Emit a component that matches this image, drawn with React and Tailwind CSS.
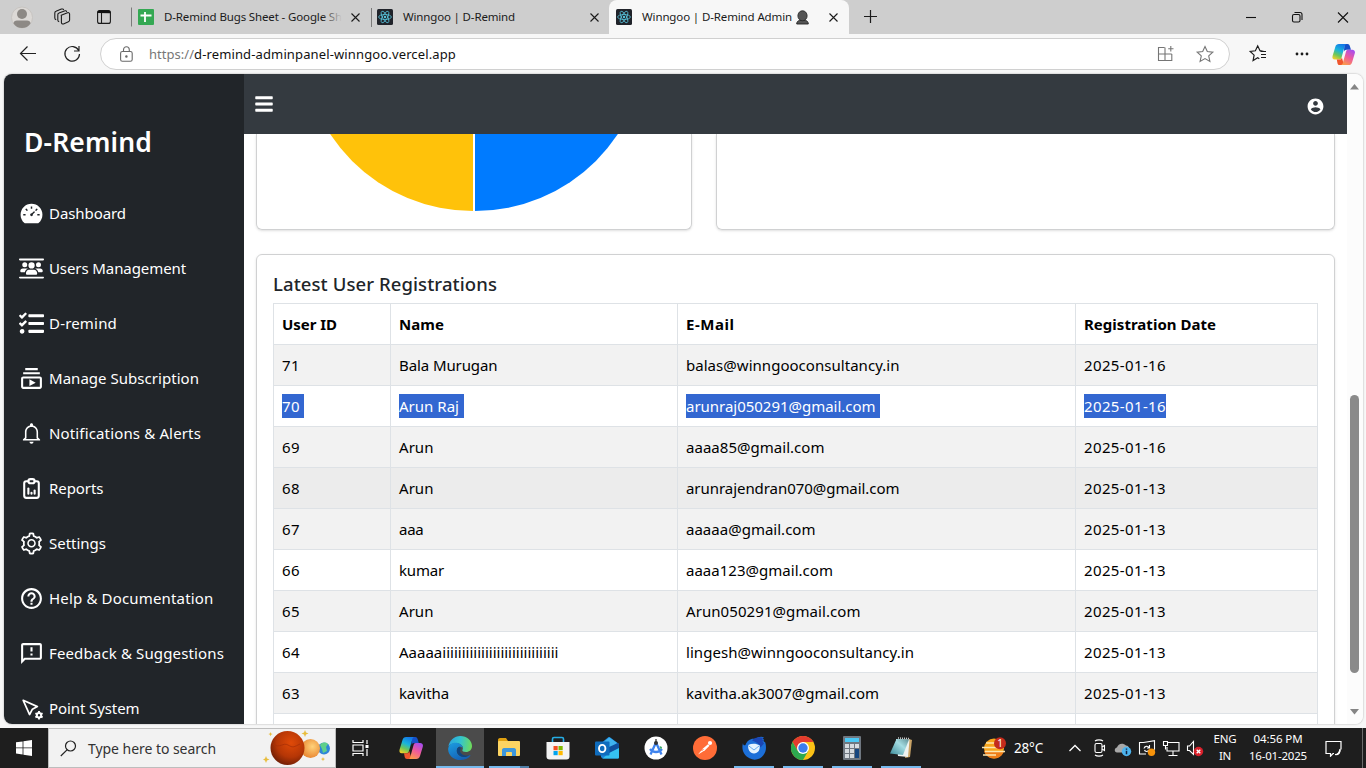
import React, { useLayoutEffect, useRef } from "react";
import { AiFillDashboard, AiOutlineSetting } from "react-icons/ai";
import { FaUsersBetweenLines } from "react-icons/fa6";
import { FaTasks, FaBars } from "react-icons/fa";
import {
  MdOutlineSubscriptions,
  MdHelpOutline,
  MdOutlineFeedback,
} from "react-icons/md";
import { IoMdNotificationsOutline } from "react-icons/io";
import { TbReportAnalytics } from "react-icons/tb";
import { RiAccountCircleFill } from "react-icons/ri";

/* Text that spreads its letters so that the line is exactly `w` pixels wide. */
function Fit({ w, className = "", children }) {
  const ref = useRef(null);
  useLayoutEffect(() => {
    const el = ref.current;
    el.style.letterSpacing = "0px";
    const n = el.textContent.length;
    el.style.letterSpacing = (w - el.getBoundingClientRect().width) / n + "px";
  }, [w, children]);
  return (
    <span ref={ref} className={"inline-block whitespace-pre " + className}>
      {children}
    </span>
  );
}

function PointIcon() {
  return (
    <svg width="25" height="25" viewBox="0 0 25 25" fill="none" className="shrink-0">
      <path d="M4.200 4.300L18.400 10.600L13.400 13.200L10.600 18.600Z" stroke="#fff" strokeWidth="1.700" strokeLinejoin="round" />
      <circle cx="20" cy="19.300" r="2.200" stroke="#fff" strokeWidth="2" />
      <path d="M20 15.100v1.700M20 21.800v1.700M16.400 17.200l1.400.8M22.200 20.600l1.400.8M23.600 17.200l-1.400.8M17.800 20.600l-1.400.8" stroke="#fff" strokeWidth="1.900" />
    </svg>
  );
}

const menu = [
  ["Dashboard", 77, AiFillDashboard],
  ["Users Management", 137, FaUsersBetweenLines],
  ["D-remind", 68, FaTasks],
  ["Manage Subscription", 150, MdOutlineSubscriptions],
  ["Notifications & Alerts", 152, IoMdNotificationsOutline],
  ["Reports", 54.5, TbReportAnalytics],
  ["Settings", 57, AiOutlineSetting],
  ["Help & Documentation", 164.5, MdHelpOutline],
  ["Feedback & Suggestions", 175, MdOutlineFeedback],
  ["Point System", 90.5, PointIcon],
];

const users = [
  ["71", "Bala Murugan", 98.5, "balas@winngooconsultancy.in", 213.5, "2025-01-16"],
  ["70", "Arun Raj", 60, "arunraj050291@gmail.com", 189.5, "2025-01-16"],
  ["69", "Arun", 34.5, "aaaa85@gmail.com", 138.5, "2025-01-16"],
  ["68", "Arun", 34.5, "arunrajendran070@gmail.com", 213.5, "2025-01-13"],
  ["67", "aaa", 24.5, "aaaaa@gmail.com", 129.5, "2025-01-13"],
  ["66", "kumar", 45, "aaaa123@gmail.com", 147, "2025-01-13"],
  ["65", "Arun", 34.5, "Arun050291@gmail.com", 174.5, "2025-01-13"],
  ["64", "Aaaaaiiiiiiiiiiiiiiiiiiiiiiiiiiiiii", 159.5, "lingesh@winngooconsultancy.in", 228, "2025-01-13"],
  ["63", "kavitha", 50, "kavitha.ak3007@gmail.com", 193, "2025-01-13"],
];

function ReactIcon() {
  return (
    <svg width="16" height="16" viewBox="0 0 16 16" className="shrink-0">
      <rect width="16" height="16" rx="1.5" fill="#20232a" />
      <g fill="none" stroke="#58c4dc" strokeWidth=".8">
        <ellipse cx="8" cy="8" rx="6.4" ry="2.5" />
        <ellipse cx="8" cy="8" rx="6.4" ry="2.5" transform="rotate(60 8 8)" />
        <ellipse cx="8" cy="8" rx="6.4" ry="2.5" transform="rotate(120 8 8)" />
      </g>
      <circle cx="8" cy="8" r="1.2" fill="#58c4dc" />
    </svg>
  );
}

function CloseX({ size = 9 }) {
  return (
    <svg width={size} height={size} viewBox="0 0 9 9" className="shrink-0" stroke="#1a1a1a" strokeWidth="1.1">
      <path d="M.5 .5l8 8M8.5 .5l-8 8" />
    </svg>
  );
}

function CopilotIcon({ size = 24, id }) {
  return (
    <svg width={size} height={size} viewBox="0 0 24 24">
      <defs>
        <linearGradient id={id + "a"} x1="0.6" y1="0" x2="0.2" y2="1">
          <stop offset="0" stopColor="#1479e8" />
          <stop offset=".4" stopColor="#19b4dc" />
          <stop offset=".7" stopColor="#6cc65a" />
          <stop offset="1" stopColor="#f6cf26" />
        </linearGradient>
        <linearGradient id={id + "b"} x1="0.8" y1="0" x2="0.3" y2="1">
          <stop offset="0" stopColor="#a44cf2" />
          <stop offset=".5" stopColor="#ee5a9c" />
          <stop offset="1" stopColor="#fb9a4b" />
        </linearGradient>
      </defs>
      <path d="M13 1h3.200c1.400 0 2 .8 2.400 2l1.200 4h-4.600c-1.500 0-2.400.8-2.800 2z" fill="#1650c8" />
      <path d="M7.200 1h8c-1 .3-1.600 1-2 2.400L10 15c-.5 1.500-1.500 2.300-3 2.300H2.800C.8 17.300 0 15.800.6 13.600L3.500 4C4 2 5.200 1 7.200 1z" fill={`url(#${id}a)`} />
      <path d="M5 17.300h2.500c1.500 0 2.300-.8 2.800-2.300L12 21c-.5 1.300-1.300 2-2.500 2H8c-1.200 0-2-.7-2.300-2z" fill="#f0562d" />
      <path d="M16.800 7h4.400c2 0 3.200 1.500 2.600 3.700L21 20c-.6 2-1.800 3-3.800 3H9.200c1.200-.2 1.800-1 2.200-2.400L14.500 9.300C14.900 7.800 15.500 7 16.800 7z" fill={`url(#${id}b)`} />
    </svg>
  );
}

function Tabs() {
  return (
    <div className="flex h-[34px] items-center bg-[#cecece] text-[11.5px] text-[#1b1b1b]">
      <svg width="132" height="34" viewBox="0 0 132 34" className="shrink-0" fill="none">
        <circle cx="22" cy="17.500" r="10.500" fill="#dcd9d6" stroke="#c4c0bc" strokeWidth=".8" />
        <circle cx="22" cy="14" r="5" fill="#8d8985" />
        <path d="M13.500 23.500c0-2 1.500-3 3.500-3h10c2 0 3.500 1 3.500 3-2 3-5 4.500-8.500 4.500s-6.500-1.500-8.500-4.500z" fill="#8d8985" />
        <g stroke="#1b1b1b" strokeWidth="1.100" strokeLinejoin="round">
          <path d="M61.200 15.300l6.300-2.500c1.100-.4 2.100.2 2.100 1.300v6c0 .8-.4 1.400-1.200 1.700l-4.900 2.100c-1.100.4-2.100-.2-2.100-1.300v-6.500z" />
          <path d="M59.200 21.700c-.9-.2-1.400-.8-1.400-1.700v-5.200c0-.8.400-1.400 1.200-1.700l5.400-2.200c1-.4 2 0 2.300.900" />
          <path d="M56.200 19.700c-.9-.2-1.400-.8-1.400-1.700v-5c0-.8.400-1.400 1.200-1.700l5.400-2.200c1-.4 2 0 2.300.900" />
          <rect x="97.600" y="10.600" width="12.800" height="12.800" rx="2" />
          <path d="M101.500 13v10.500" />
        </g>
        <path d="M97.500 13v-.5c0-1.200.8-2 2-2h9c1.200 0 2 .8 2 2v.8z" fill="#111" />
        <path d="M131.500 7.500v19" stroke="#7a7a7a" />
      </svg>
      <div className="flex w-[239px] items-center pl-1.5">
        <svg width="16" height="16" viewBox="0 0 16 16" className="shrink-0">
          <rect width="16" height="16" rx="1" fill="#34a853" />
          <path d="M7 3v10M2.500 6.500h11" stroke="#fff" strokeWidth="1.800" />
        </svg>
        <div className="relative ml-2.5 w-[178px] overflow-hidden">
          <Fit w={178}>D-Remind Bugs Sheet - Google Sh</Fit>
          <div className="absolute top-0 right-0 h-full w-5 bg-gradient-to-r from-transparent to-[#cecece]" />
        </div>
        <div className="ml-[9px] flex"><CloseX /></div>
      </div>
      <div className="h-[19px] w-px bg-[#7a7a7a]" />
      <div className="flex w-[237px] items-center pl-[5px]">
        <ReactIcon />
        <Fit w={112} className="ml-[10px]">Winngoo | D-Remind</Fit>
        <div className="ml-[75px] flex"><CloseX /></div>
      </div>
      <div className="flex h-full w-[240px] items-center rounded-t-lg bg-[#f7f7f7] pl-[7px]">
        <ReactIcon />
        <Fit w={150} className="ml-[10px]">Winngoo | D-Remind Admin</Fit>
        <svg width="13" height="15" viewBox="0 0 13 15" className="ml-1 shrink-0">
          <path d="M.7 14c0-2 1.200-3.500 3-3.500h5.600c1.800 0 3 1.500 3 3.500z" fill="#555" stroke="#222" strokeWidth=".9" />
          <ellipse cx="6.500" cy="5.800" rx="4.600" ry="5" fill="#555" stroke="#2b2b2b" strokeWidth=".9" />
        </svg>
        <div className="ml-5 flex"><CloseX /></div>
      </div>
      <svg width="44" height="34" viewBox="0 0 44 34" stroke="#1b1b1b" strokeWidth="1.200">
        <path d="M15 16.500h13M21.500 10v13" />
      </svg>
      <svg width="130" height="34" viewBox="0 0 130 34" className="ml-auto" fill="none" stroke="#111" strokeWidth="1.100">
        <path d="M10 17.500h10" />
        <rect x="56.500" y="14.500" width="7.500" height="7.500" rx="1.500" />
        <path d="M58.500 12.500h5.500c1.200 0 2 .8 2 2v5.500" />
        <path d="M102 12.500l10 10M112 12.500l-10 10" />
      </svg>
    </div>
  );
}

function Toolbar() {
  return (
    <div className="flex h-10 items-center bg-[#f7f7f7]">
      <svg width="100" height="40" viewBox="0 0 100 40" fill="none" stroke="#222" strokeWidth="1.200" className="shrink-0">
        <path d="M36 19.500H20.500M27.500 12.500l-7 7 7 7" />
        <path d="M78.700 16.500a7.300 7.300 0 1 0 .8 3.500M79 12v5h-5" />
      </svg>
      <div className="flex h-8 w-[1130px] items-center rounded-full border border-[#d0d0d0] bg-white text-[14px] text-[#111]">
        <svg width="13" height="16" viewBox="0 0 13 16" className="ml-[19px] shrink-0" fill="none" stroke="#6a6a6a" strokeWidth="1.100">
          <rect x=".6" y="5.500" width="11.600" height="9.800" rx="1.800" />
          <path d="M3.500 5.500V3.800C3.500 2 4.700.8 6.400.8s2.900 1.200 2.900 3v1.700" />
          <circle cx="6.400" cy="10.400" r=".7" fill="#444" />
        </svg>
        <span className="mt-px ml-4 text-[13px]">
          <Fit w={45} className="text-[#777]">https://</Fit>
          <Fit w={262}>d-remind-adminpanel-winngoo.vercel.app</Fit>
        </span>
        <svg width="79" height="30" viewBox="0 0 79 30" className="ml-auto" fill="none" stroke="#757575" strokeWidth="1.100">
          <path d="M14.500 8.500H8.500v13h13.300v-6.500M8.500 15h13.300M15 8.500v13M18.200 9.800h5.300M20.800 7v5.500" />
          <path d="M55 7.500l2.300 5.100 5.500.6-4.100 3.700 1.200 5.500-4.900-2.800-4.900 2.800 1.200-5.500-4.100-3.700 5.500-.6z" />
        </svg>
      </div>
      <svg width="102" height="40" viewBox="0 0 102 40" fill="none" stroke="#1b1b1b" strokeWidth="1.200" className="shrink-0">
        <path d="M34 17.500l-4-.8-2.300-4.900-2.300 5-5.200.6 3.900 3.700-1 5.500 4.600-2.800 1.600.9M30.500 17.500h5.500M31 20.500h5M31 23.500h5" />
        <g fill="#1b1b1b" stroke="none"><circle cx="67" cy="20" r="1.400" /><circle cx="72" cy="20" r="1.400" /><circle cx="77" cy="20" r="1.400" /></g>
      </svg>
      <CopilotIcon size={23} id="c1" />
    </div>
  );
}

function Sidebar() {
  return (
    <aside className="w-[240px] shrink-0 bg-[#212529] text-white">
      <div className="flex h-[112px] items-end pb-[26px] pl-5">
        <Fit w={128} className="text-[26.500px] leading-[35px] font-semibold">D-Remind</Fit>
      </div>
      <ul>
        {menu.map(([label, w, Icon]) => (
          <li key={label} className="flex h-[55px] items-center gap-[5px] pl-[15px]">
            <Icon size={25} className="shrink-0" />
            <Fit w={w} className="mb-0.5 text-[15px] leading-6">{label}</Fit>
          </li>
        ))}
      </ul>
    </aside>
  );
}

function Cell({ selected, w, tail, children }) {
  if (!selected) return <Fit w={w}>{children}</Fit>;
  return (
    <span className={"inline-block h-6 bg-[#3367d1] text-white " + tail}>
      <Fit w={w}>{children}</Fit>
    </span>
  );
}

function Registrations() {
  return (
    <section className="mt-6 h-[600px] rounded-md border border-[#d0d1d2] p-4 shadow-sm">
      <h2 className="h-8 pt-px text-[18.500px] leading-[24px] font-medium text-[#212529]">
        <Fit w={224}>Latest User Registrations</Fit>
      </h2>
      <table className="w-[1045px] table-fixed border-collapse text-[15px] leading-6 text-black [&_td]:h-[41px] [&_td]:border [&_td]:border-[#dee2e6] [&_td]:px-2 [&_td]:py-0 [&_th]:h-[41px] [&_th]:border [&_th]:border-[#dee2e6] [&_th]:px-2 [&_th]:py-0 [&_th]:text-left [&_th]:font-bold">
        <colgroup>
          <col className="w-[117px]" />
          <col className="w-[287px]" />
          <col className="w-[398px]" />
          <col />
        </colgroup>
        <thead>
          <tr>
            <th><Fit w={55}>User ID</Fit></th>
            <th><Fit w={45}>Name</Fit></th>
            <th><Fit w={48.5}>E-Mail</Fit></th>
            <th><Fit w={132}>Registration Date</Fit></th>
          </tr>
        </thead>
        <tbody>
          {users.map(([id, name, nw, mail, mw, date]) => {
            const sel = id === "70";
            return (
              <tr key={id} className={id === "68" ? "bg-[#ececec]" : Number(id) % 2 ? "bg-[#f2f2f2]" : "bg-white"}>
                <td><Cell selected={sel} tail="pr-1" w={18}>{id}</Cell></td>
                <td><Cell selected={sel} tail="pr-[5px]" w={nw}>{name}</Cell></td>
                <td><Cell selected={sel} tail="pr-1" w={mw}>{mail}</Cell></td>
                <td><Cell selected={sel} tail="" w={82}>{date}</Cell></td>
              </tr>
            );
          })}
          <tr className="bg-white"><td /><td /><td /><td /></tr>
        </tbody>
      </table>
    </section>
  );
}

function Page() {
  return (
    <div className="flex h-[650px] overflow-hidden rounded-lg bg-white shadow-[0_0_2px_rgba(0,0,0,0.35)]">
      <Sidebar />
      <main className="flex w-[1103px] shrink-0 flex-col">
        <header className="flex h-[60px] shrink-0 items-center justify-between bg-[#343a40] pr-[22px] pl-2.5 text-white">
          <FaBars size={20} />
          <RiAccountCircleFill size={19} className="mt-1" />
        </header>
        <div className="min-h-0 flex-1 overflow-hidden px-3">
          <div className="flex gap-6">
            <div className="flex h-24 w-[436px] justify-center rounded-b-md border border-t-0 border-[#d0d1d2] shadow-sm">
              <svg width="344" height="78" viewBox="302 134 344 78">
                <path d="M473 -131 A171 171 0 0 0 473 211 Z" fill="#ffc20a" />
                <path d="M475 -131 A171 171 0 0 1 475 211 Z" fill="#007bff" />
              </svg>
            </div>
            <div className="h-24 w-[619px] rounded-b-md border border-t-0 border-[#d0d1d2] shadow-sm" />
          </div>
          <Registrations />
        </div>
      </main>
      <div className="flex w-4 flex-col items-center bg-[#fcfcfc] pr-0.5">
        <svg width="9" height="6" viewBox="0 0 9 6" className="mt-2.5 shrink-0"><path d="M0 5.500L4.500 0 9 5.500z" fill="#858585" /></svg>
        <div className="mt-[305px] h-[278px] w-[9px] shrink-0 rounded-full bg-[#8a8a8a]" />
        <svg width="9" height="6" viewBox="0 0 9 6" className="mt-9 shrink-0"><path d="M0 0L4.500 5.500 9 0z" fill="#858585" /></svg>
      </div>
    </div>
  );
}

function Planets() {
  return (
    <svg width="72" height="38" viewBox="0 0 72 38">
      <defs>
        <radialGradient id="mars" cx=".6" cy=".35" r=".7"><stop offset="0" stopColor="#e04a08" /><stop offset=".6" stopColor="#b53606" /><stop offset="1" stopColor="#6b1d05" /></radialGradient>
        <radialGradient id="ven" cx=".6" cy=".4" r=".6"><stop offset="0" stopColor="#ffd27a" /><stop offset="1" stopColor="#ea8a35" /></radialGradient>
      </defs>
      <circle cx="61" cy="19.500" r="6" fill="#2f86d8" />
      <path d="M57 16c2-3 6-3 8-1l-2 3 1 4-4 2-1-4z" fill="#5fd08a" />
      <circle cx="47.500" cy="19.500" r="9.500" fill="url(#ven)" />
      <circle cx="24.500" cy="19" r="17" fill="url(#mars)" />
      <path d="M10 15c7 5 10-2 15 1s6 2 12-1" stroke="#a83006" strokeWidth=".8" fill="none" />
      <g fill="#e8bd3c">
        <path d="M3 27l1 2.500 2.500 1-2.500 1-1 2.500-1-2.500-2-1 2-1z" />
        <path d="M42 1l1 2.500 2.500 1-2.500 1-1 2.500-1-2.500-2.500-1 2.500-1z" />
        <path d="M7.500 3l.6 1.500 1.500.6-1.500.6-.6 1.500-.6-1.500-1.500-.6 1.500-.6z" />
        <path d="M60 28l.6 1.500 1.500.6-1.500.6-.6 1.500-.6-1.500-1.500-.6 1.500-.6z" />
      </g>
    </svg>
  );
}

const apps = [
  ["copilot", "", <CopilotIcon size={24} id="c2" />],
  ["edge", "active", (
    <svg width="24" height="24" viewBox="0 0 24 24">
      <defs>
        <linearGradient id="eg" x1="0" y1=".4" x2="1" y2=".5"><stop offset="0" stopColor="#2ba4e0" /><stop offset=".5" stopColor="#33c4cf" /><stop offset="1" stopColor="#6fdc5a" /></linearGradient>
        <linearGradient id="ed" x1="0" y1="0" x2=".6" y2="1"><stop offset="0" stopColor="#1b9de2" /><stop offset="1" stopColor="#1560b4" /></linearGradient>
      </defs>
      <path d="M.4 10.500C1.400 4.500 6.300 0 12.300 0 19 0 24 4.700 24 10c0 3.800-2.700 6-6 6-2.600 0-4-1-3.600-2 1.200-2.200.2-5.500-3.900-6.500C5.800 6.500 1.800 8 .4 10.500z" fill="url(#eg)" />
      <path d="M.2 12.500C.8 8.500 4.500 6.400 8.500 6.800c4 .4 6.200 3 6.200 5.200-1-1-2.400-1.500-3.500-1.200-3 1.200-3.200 5.500-.5 8.200 2.800 2.600 7.300 2.500 10.800.2.700-.4 1.100.2.700.8C20.200 22.500 16.500 24 12.500 24 5.200 24-.4 18.500.2 12.500z" fill="url(#ed)" />
      <path d="M11.500 10.800c-3.200 1-3.500 5.500-.8 8.200 2.800 2.600 7.300 2.500 10.800.2-2.500.8-6 .5-7.700-1.200-2.300-1.800-2.200-3.800-.8-5.500z" fill="#10457f" />
    </svg>
  )],
  ["explorer", "explorer", (
    <svg width="24" height="22" viewBox="0 0 24 22">
      <path d="M1 3c0-1 .5-2 2-2h6l2 3h11v6H1z" fill="#e0a010" />
      <rect x="1" y="4" width="22" height="15" rx="1" fill="#fcd462" />
      <path d="M5 19v-6c0-1 .6-2 2-2h10c1.400 0 2 1 2 2v6h-4v-3c0-.6-.4-1-1-1h-4c-.6 0-1 .4-1 1v3z" fill="#3d97dc" />
    </svg>
  )],
  ["store", "", (
    <svg width="24" height="24" viewBox="0 0 24 24">
      <path d="M6.500 6V3c0-1 .5-1.500 1.500-1.500h8c1 0 1.500.5 1.500 1.500v3" stroke="#25aee6" strokeWidth="1.600" fill="none" />
      <path d="M.5 6h23v14.500c0 2-1 3-3 3h-17c-2 0-3-1-3-3z" fill="#f3f3f3" />
      <path d="M7.500 10h4.200v4.200H7.500z" fill="#f25022" /><path d="M12.500 10h4.200v4.200h-4.200z" fill="#7fba00" />
      <path d="M7.500 15h4.200v4.200H7.500z" fill="#00a4ef" /><path d="M12.500 15h4.200v4.200h-4.200z" fill="#ffb900" />
    </svg>
  )],
  ["outlook", "", (
    <svg width="24" height="24" viewBox="0 0 24 24">
      <path d="M5 8l8-6.500c.8-.6 1.500-.6 2.300 0L24 8v13c0 1-.6 1.500-1.500 1.500h-15L6 21z" fill="#1a86d9" />
      <path d="M7 7l6.500-5c.5-.4 1.200-.4 1.700 0L22 7l-8 6z" fill="#3fb2ef" />
      <path d="M24 9v12c0 1-.6 1.500-1.500 1.500h-15z" fill="#35c1f1" />
      <path d="M14 11l9-4 1 1v4l-10 5z" fill="#0f4f9e" />
      <rect y="5.500" width="14.500" height="14" rx="1" fill="#0f6cbd" />
      <ellipse cx="7.200" cy="12.500" rx="3.200" ry="3.600" fill="none" stroke="#fff" strokeWidth="1.900" />
    </svg>
  )],
  ["studio", "", (
    <svg width="24" height="24" viewBox="0 0 24 24">
      <circle cx="12" cy="12" r="11.500" fill="#fff" />
      <path d="M12 6.500L6.500 18.500M12 6.500l5.500 12M6 13c3 4 9 4 12 0" stroke="#3f83ee" strokeWidth="2.300" fill="none" />
      <path d="M15.500 10l2.500 1-1 3z" fill="#2ea35a" /><circle cx="12" cy="7" r="2" fill="#333" /><path d="M12 3v3" stroke="#333" strokeWidth="1.300" />
    </svg>
  )],
  ["postman", "", (
    <svg width="24" height="24" viewBox="0 0 24 24">
      <circle cx="12" cy="12" r="12" fill="#ff6c37" />
      <path d="M5 18.500l5-6 5-4.300 1.500 1.500-4.500 4.500z" fill="#fff" /><circle cx="17" cy="7" r="2.100" fill="#fff" />
      <path d="M8.500 14.500l2-1" stroke="#ff6c37" />
    </svg>
  )],
  ["thunderbird", "run", (
    <svg width="24" height="24" viewBox="0 0 24 24">
      <path d="M1 7c0 2 1.200 2.800 2.500 2C5 4.500 9 2 13.500 3 16 .8 19.500.3 22 1.500L20.500 3l1.700.5L21.300 5l2 1.500C24.500 11 24.300 15.500 21.500 19 18.500 23.500 12.500 25 7.500 22.300 1.500 19.300-.8 13 1 7z" fill="#1c6fd8" />
      <path d="M10 4.500c3-3.500 8-4 11-2.500l-1 1.500 1.500.5-1 1.500 1.500 2-3.500 4c-1-3-3-5-8.500-7z" fill="#1b46b4" />
      <path d="M6.200 9c3.500-1.800 8-1.800 11.500.3.500 5-1.700 8-5.700 8.200-4-.3-6.300-3.500-5.800-8.500z" fill="#e6f4ff" />
      <path d="M6.300 9.500l5.700 4.500 5.600-4.500" stroke="#6aaef0" fill="none" />
    </svg>
  )],
  ["chrome", "run", (
    <svg width="24" height="24" viewBox="0 0 24 24">
      <circle cx="12" cy="12" r="12" fill="#fbc116" />
      <path d="M1.600 6A12 12 0 0 1 22.400 6H12L6.800 15z" fill="#e33b2e" />
      <path d="M1.600 6A12 12 0 0 0 12 24l5.200-9H6.800z" fill="#2da94f" />
      <circle cx="12" cy="12" r="6" fill="#fff" /><circle cx="12" cy="12" r="4.700" fill="#3b7ded" />
    </svg>
  )],
  ["calc", "run", (
    <svg width="18" height="24" viewBox="0 0 18 24">
      <rect width="18" height="24" rx="1" fill="#6f7780" /><rect x="2" y="2" width="14" height="4" fill="#4cc8f4" />
      <g fill="#d6dbe0"><path d="M2 8h4v4H2zM7 8h4v4H7zM12 8h4v4h-4zM2 13h4v4H2zM7 13h4v4H7zM2 18h4v4H2zM7 18h4v4H7z" /></g>
      <path d="M12 13h4v9h-4z" fill="#16467f" />
    </svg>
  )],
  ["notepad", "run", (
    <svg width="24" height="24" viewBox="0 0 24 24">
      <defs><linearGradient id="np" x1="0" y1="1" x2="1" y2="0"><stop offset="0" stopColor="#3b8b99" /><stop offset=".6" stopColor="#a4dce2" /><stop offset="1" stopColor="#5f8f94" /></linearGradient></defs>
      <path d="M20 3l3 1-2 17-5 1z" fill="#caa467" /><path d="M7 3L20.500 3.500 19 21l-10-1z" fill="#eef2f0" />
      <path d="M7.500 3l12.500.5L14 19 1 17.500z" fill="url(#np)" /><path d="M9 2l11 .5" stroke="#ccc" strokeWidth="1.500" strokeDasharray="1 1" />
    </svg>
  )],
];

function Tray() {
  return (
    <svg width="140" height="40" viewBox="1065 728 140 40" fill="none" stroke="#fff" strokeWidth="1.100">
      <path d="M1069.500 751l5.500-5.500 5.500 5.500" strokeWidth="1.300" />
      <rect x="1095" y="743.500" width="7" height="9" rx="1.500" /><path d="M1102 747l2.500-1.500v5l-2.500-1.500M1095 741c2-1.500 6-1.500 8 0M1095 755c2 1.500 6 1.500 8 0" />
      <path d="M1117 752.500c-3 0-3-4.500 0-5 1-4 6-5 9-2 4 0 4 6 2 7z" fill="#a8a8a8" stroke="none" />
      <circle cx="1126.500" cy="751.500" r="4.700" fill="#4db4ee" stroke="none" /><path d="M1126.500 748.500v1.300M1126.500 750.800v3.500" stroke="#124" strokeWidth="1.500" />
      <path d="M1146 754h-6.500v-11.500h4M1143.500 742.500l11-1.800v9" /><path d="M1144 748.500c.5-2.500 4-3 5-.8M1149.500 745v3h-2.500M1149 750c-1 2-4 1.800-4.500 0" />
      <circle cx="1151.500" cy="752.300" r="3.700" fill="#f7930a" stroke="none" />
      <path d="M1168 742.500h11v8.500h-12v-4M1173 751v4M1168.500 755.500h9" /><path d="M1163.500 741.500h4v4h-4zM1165.500 745.500v4" />
      <path d="M1187.500 746v4.500h2l4 4v-13l-4 4.500z" />
      <circle cx="1198.500" cy="751.500" r="4.700" fill="#d9202b" stroke="none" /><path d="M1196.700 749.700l3.600 3.600M1200.300 749.700l-3.600 3.600" strokeWidth="1.300" />
    </svg>
  );
}

function Taskbar() {
  return (
    <div className="flex h-10 bg-[#1e1e1e] text-white">
      <div className="flex w-12 items-center justify-center">
        <svg width="16" height="16" viewBox="0 0 16 16" fill="#fff"><path d="M0 2.300l6.600-.9v6.100H0zM7.400 1.200L16 0v7.500H7.400zM0 8.300h6.600v6.200L0 13.600zM7.400 8.300H16V16l-8.600-1.300z" /></svg>
      </div>
      <div className="flex w-72 items-center border border-[#bdbdbd] bg-[#f2f2f2] text-[#333]">
        <svg width="17" height="17" viewBox="0 0 17 17" className="ml-[11px]" fill="none" stroke="#222" strokeWidth="1.200"><circle cx="10.500" cy="6" r="5" /><path d="M7 9.800L.8 16" /></svg>
        <Fit w={128} className="ml-[11px] text-[14px]">Type here to search</Fit>
        <div className="ml-auto"><Planets /></div>
      </div>
      <div className="flex w-[51px] items-center pl-4">
        <svg width="18" height="16" viewBox="0 0 18 16" fill="none" stroke="#fff" strokeWidth="1.200"><path d="M1 0v2.500h10V0M1 16v-2.500h10V16M1 5h10v6H1zM15 0v4M15 9v7" /><path d="M13.500 5h3v3h-3z" fill="#fff" stroke="none" /></svg>
      </div>
      <div className="flex gap-px">
        {apps.map(([name, kind, icon]) => (
          <div key={name} className={"flex w-12 flex-col items-center " + (kind === "active" ? "bg-[#4b4b4b]" : "")}>
            <div className="flex h-[38px] shrink-0 items-center pt-0.5">{icon}</div>
            {kind === "active" && <div className="h-0.5 w-12 shrink-0 bg-[#76b9ed]" />}
            {kind === "run" && <div className="h-0.5 w-10 shrink-0 bg-[#76b9ed]" />}
            {kind === "explorer" && <div className="h-0.5 w-10 shrink-0 border-r-[9px] border-[#4f7ea6] bg-[#76b9ed]" />}
          </div>
        ))}
      </div>
      <div className="ml-auto flex items-center text-[11.500px]">
        <svg width="24" height="22" viewBox="0 0 24 22">
          <circle cx="12" cy="11.500" r="10" fill="#f8a51b" /><path d="M2 14h20c-1 4-5 7.500-10 7.500s-9-3.500-10-7.500z" fill="#ee7d18" />
          <path d="M4 6h12M0 10.500h17M3 14.500h20M1 18h13" stroke="#fbe6b0" strokeWidth="1.400" />
          <circle cx="18" cy="6.300" r="6" fill="#c42b1c" />
          <text x="18" y="10" textAnchor="middle" fontSize="10" fill="#fff">1</text>
        </svg>
        <Fit w={29} className="ml-2 text-[13.500px]">28°C</Fit>
        <div className="ml-[22px]"><Tray /></div>
        <div className="ml-[7px] flex w-[26px] flex-col items-center pb-0.5 leading-[17px]"><Fit w={23}>ENG</Fit><Fit w={12}>IN</Fit></div>
        <div className="ml-2.5 flex w-[60px] flex-col items-center pb-0.5 leading-[17px]"><Fit w={49}>04:56 PM</Fit><Fit w={58}>16-01-2025</Fit></div>
        <svg width="17" height="17" viewBox="0 0 17 17" className="ml-[17px]" fill="none" stroke="#fff" strokeWidth="1.200">
          <path d="M9 13.500H8l-2.500 2.700v-2.700H1V1.500h15v8" /><path d="M15 9c1 3.500-1.500 6-5 5.500 3 0 4.500-2.500 5-5.500z" fill="#fff" />
        </svg>
        <div className="ml-5 h-10 w-px bg-[#6b6b6b]" />
        <div className="w-[3px]" />
      </div>
    </div>
  );
}

export default function App() {
  return (
    <div className="flex h-[768px] w-[1366px] flex-col overflow-hidden bg-[#f7f7f7] font-['Noto_Sans',sans-serif]">
      <Tabs />
      <Toolbar />
      <div className="h-[654px] pr-[3px] pl-1">
        <Page />
      </div>
      <Taskbar />
    </div>
  );
}
